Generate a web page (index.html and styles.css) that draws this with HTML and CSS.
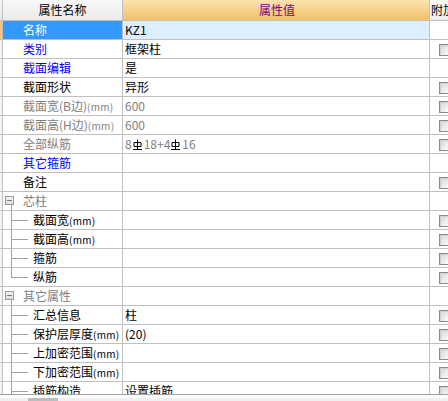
FILE: index.html
```html
<!DOCTYPE html>
<html>
<head>
<meta charset="utf-8">
<link rel="stylesheet" href="styles.css">
</head>
<body>
<div class="grid">
  <div class="row head">
    <div class="strip"></div>
    <div class="name">属性名称</div>
    <div class="val">属性值</div>
    <div class="att">附加</div>
  </div>
  <div class="row sel">
    <div class="strip"></div>
    <div class="name">名称</div>
    <div class="val">KZ1</div>
    <div class="att"></div>
  </div>
  <div class="row">
    <div class="strip"></div>
    <div class="name blue">类别</div>
    <div class="val">框架柱</div>
    <div class="att"><span class="cb"></span></div>
  </div>
  <div class="row">
    <div class="strip"></div>
    <div class="name blue">截面编辑</div>
    <div class="val">是</div>
    <div class="att"></div>
  </div>
  <div class="row">
    <div class="strip"></div>
    <div class="name">截面形状</div>
    <div class="val">异形</div>
    <div class="att"><span class="cb"></span></div>
  </div>
  <div class="row gray">
    <div class="strip"></div>
    <div class="name">截面宽(B边)<span class="mm">(mm)</span></div>
    <div class="val">600</div>
    <div class="att"><span class="cb"></span></div>
  </div>
  <div class="row gray">
    <div class="strip"></div>
    <div class="name">截面高(H边)<span class="mm">(mm)</span></div>
    <div class="val">600</div>
    <div class="att"><span class="cb"></span></div>
  </div>
  <div class="row gray">
    <div class="strip"></div>
    <div class="name">全部纵筋</div>
    <div class="val">8<svg class="rb" width="9" height="11" viewBox="0 0 9 11"><path d="M4.5 0.5V10.5M1 3.5H8V7.5H1ZM0 10.5H9" fill="none" stroke="#000" stroke-width="1"/></svg>18+4<svg class="rb" width="9" height="11" viewBox="0 0 9 11"><path d="M4.5 0.5V10.5M1 3.5H8V7.5H1ZM0 10.5H9" fill="none" stroke="#000" stroke-width="1"/></svg>16</div>
    <div class="att"><span class="cb"></span></div>
  </div>
  <div class="row">
    <div class="strip"></div>
    <div class="name blue">其它箍筋</div>
    <div class="val"></div>
    <div class="att"></div>
  </div>
  <div class="row">
    <div class="strip"></div>
    <div class="name">备注</div>
    <div class="val"></div>
    <div class="att"><span class="cb"></span></div>
  </div>
  <div class="row gray">
    <div class="strip"></div>
    <div class="name grp"><span class="box"></span>芯柱</div>
    <div class="val"></div>
    <div class="att"></div>
  </div>
  <div class="row">
    <div class="strip"></div>
    <div class="name child">截面宽<span class="mm">(mm)</span></div>
    <div class="val"></div>
    <div class="att"><span class="cb"></span></div>
  </div>
  <div class="row">
    <div class="strip"></div>
    <div class="name child">截面高<span class="mm">(mm)</span></div>
    <div class="val"></div>
    <div class="att"><span class="cb"></span></div>
  </div>
  <div class="row">
    <div class="strip"></div>
    <div class="name child">箍筋</div>
    <div class="val"></div>
    <div class="att"><span class="cb"></span></div>
  </div>
  <div class="row">
    <div class="strip"></div>
    <div class="name child last">纵筋</div>
    <div class="val"></div>
    <div class="att"><span class="cb"></span></div>
  </div>
  <div class="row gray">
    <div class="strip"></div>
    <div class="name grp"><span class="box"></span>其它属性</div>
    <div class="val"></div>
    <div class="att"></div>
  </div>
  <div class="row">
    <div class="strip"></div>
    <div class="name child">汇总信息</div>
    <div class="val">柱</div>
    <div class="att"><span class="cb"></span></div>
  </div>
  <div class="row">
    <div class="strip"></div>
    <div class="name child">保护层厚度<span class="mm">(mm)</span></div>
    <div class="val">(20)</div>
    <div class="att"><span class="cb"></span></div>
  </div>
  <div class="row">
    <div class="strip"></div>
    <div class="name child">上加密范围<span class="mm">(mm)</span></div>
    <div class="val"></div>
    <div class="att"><span class="cb"></span></div>
  </div>
  <div class="row">
    <div class="strip"></div>
    <div class="name child">下加密范围<span class="mm">(mm)</span></div>
    <div class="val"></div>
    <div class="att"><span class="cb"></span></div>
  </div>
  <div class="row">
    <div class="strip"></div>
    <div class="name child">插筋构造</div>
    <div class="val">设置插筋</div>
    <div class="att"><span class="cb"></span></div>
  </div>
</div>
<div class="hscroll"><div class="thumb"></div></div>
</body>
</html>
```
FILE: styles.css
```css
html, body {
  margin: 0;
  padding: 0;
  background: #fff;
  overflow: hidden;
}
body {
  width: 448px;
  height: 401px;
  font-family: "Noto Sans CJK SC", "Noto Sans", sans-serif;
  font-size: 12px;
  color: #000;
}
.grid {
  height: 394px;
  overflow: hidden;
  border-bottom: 1px solid #a0a0a0;
}
.row {
  display: flex;
  height: 18px;
  border-bottom: 1px solid #c0c0c0;
  line-height: 18px;
  white-space: nowrap;
}
.strip {
  width: 2px;
  flex: none;
  border-right: 1px solid #c0c0c0;
  background: #f4f4f4;
}
.name {
  width: 120px;
  flex: none;
  border-right: 1px solid #c0c0c0;
  padding-left: 20px;
  box-sizing: border-box;
  overflow: hidden;
}
.val {
  width: 307px;
  flex: none;
  border-right: 1px solid #c0c0c0;
  padding-left: 2px;
  box-sizing: border-box;
  display: flex;
  align-items: center;
}
.att {
  flex: 1;
  padding-left: 9px;
  overflow: hidden;
}
.mm {
  font-size: 10px;
  letter-spacing: 0.3px;
}
.head {
  height: 20px;
  line-height: 20px;
  font-size: 12px;
}
.head .strip {
  background: linear-gradient(#f6f6f6, #e6e6e6);
}
.head .name {
  padding-left: 0;
  text-align: center;
  background: linear-gradient(#f8f8f8, #ebebeb);
}
.head .val {
  justify-content: center;
  color: #800080;
  background: linear-gradient(#fde3ae, #f2c068);
}
.head .att {
  padding-left: 1px;
  background: linear-gradient(#fafafa, #ededed);
}
.sel .strip {
  background: #fcc47a;
}
.sel .name {
  background: #3399ff;
  color: #fff;
}
.sel .val {
  background: #ddeeff;
}
.name.blue {
  color: #0000ff;
}
.gray .name, .gray .val {
  color: #808080;
}
.rb {
  margin: 0 2px 0 1px;
}
.cb {
  display: inline-block;
  width: 10px;
  height: 10px;
  margin-top: 4px;
  vertical-align: top;
  border: 1px solid #8a8a8a;
  box-shadow: inset 1px 1px 0 #d0d0d0;
  background: linear-gradient(135deg, #d4d4da, #ffffff);
}
.grp {
  padding-left: 2px;
  display: flex;
  align-items: center;
  background: linear-gradient(#a0a0a0, #a0a0a0) no-repeat 8px 13px / 1px 100%;
}
.box {
  width: 7px;
  height: 7px;
  flex: none;
  margin-right: 9px;
  margin-top: -2px;
  border: 1px solid #9a9a9a;
  background: linear-gradient(#7a7a7a, #7a7a7a) no-repeat center / 5px 1px, linear-gradient(#f4f4f4, #dcdcdc);
}
.child {
  padding-left: 30px;
  background:
    linear-gradient(#a0a0a0, #a0a0a0) no-repeat 8px 0 / 1px 19px,
    linear-gradient(#a0a0a0, #a0a0a0) no-repeat 8px 9px / 17px 1px;
}
.child.last {
  background:
    linear-gradient(#a0a0a0, #a0a0a0) no-repeat 8px 0 / 1px 10px,
    linear-gradient(#a0a0a0, #a0a0a0) no-repeat 8px 9px / 17px 1px;
}
.hscroll {
  height: 6px;
  background: #f0f0f0;
  padding-left: 28px;
}
.thumb {
  width: 30px;
  height: 3px;
  margin-top: 3px;
  background: #bdbdbd;
}
```
